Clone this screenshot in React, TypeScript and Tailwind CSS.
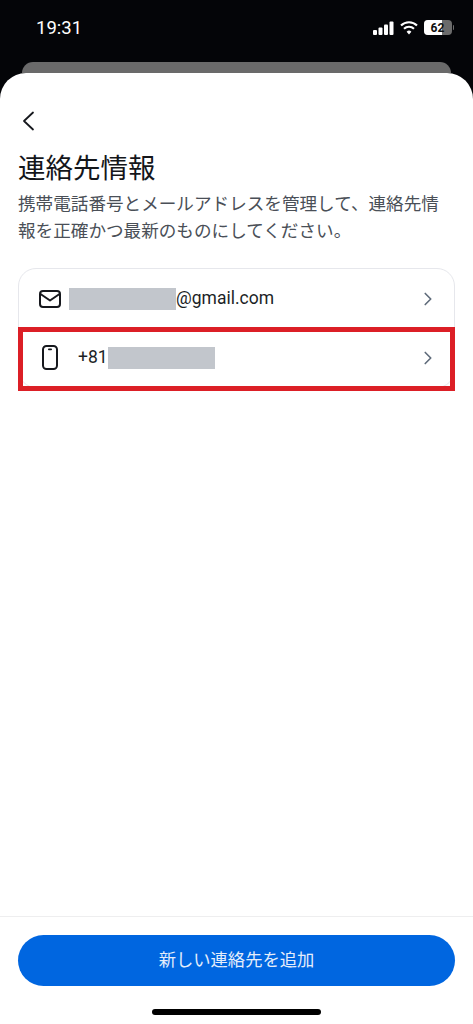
import { ChevronRight } from "lucide-react"

const jp = "font-['Roboto','Noto_Sans_CJK_JP',sans-serif]"

function StatusIcons() {
  return (
    <div className="flex items-center gap-[6px]">
      <svg width="21" height="14" viewBox="0 0 21 14" fill="#fff">
        <rect x="0" y="9" width="4" height="5" rx="1" />
        <rect x="5.5" y="6.5" width="4" height="7.5" rx="1" />
        <rect x="11" y="3.5" width="4" height="10.5" rx="1" />
        <rect x="16.5" y="0.5" width="4" height="13.5" rx="1" />
      </svg>
      <svg width="18" height="14" viewBox="0 0 18 14" fill="none" stroke="#fff" strokeWidth="2.1">
        <path d="M1 4.6a11.4 11.4 0 0 1 16 0" />
        <path d="M4 7.7a7.2 7.2 0 0 1 10 0" />
        <path d="M9 13.6 6.6 10.8a3.4 3.4 0 0 1 4.8 0Z" fill="#fff" stroke="none" />
      </svg>
      <div className="flex items-center gap-[1px]">
        <div className="relative flex h-[15px] w-[28px] items-center justify-center overflow-hidden rounded-[4px] bg-[#6b6b6b]">
          <div className="absolute inset-y-0 left-0 w-[18px] bg-white" />
          <span className="relative text-[12px] font-bold leading-none text-[#111] font-['Roboto',sans-serif]">62</span>
        </div>
        <div className="h-[5px] w-[1.5px] rounded-r-full bg-[#6b6b6b]" />
      </div>
    </div>
  )
}

function ContactRow({ icon, children }: { icon: React.ReactNode; children: React.ReactNode }) {
  return (
    <div className="flex h-[59px] items-center pl-[19px] pr-[15px]">
      <div className="flex w-[24px] shrink-0 justify-center">{icon}</div>
      <div className="flex min-w-0 flex-1 items-center text-[17.5px] text-[#1c1f26] font-['Roboto',sans-serif]">{children}</div>
      <ChevronRight className="h-[22px] w-[22px] text-[#5f6b7a]" strokeWidth={1.8} />
    </div>
  )
}

export default function App() {
  return (
    <div className={`flex h-[1024px] w-[473px] flex-col overflow-hidden bg-[#040508] ${jp}`}>
      <div className="flex h-[62px] shrink-0 items-start justify-between pl-[36px] pr-[19px] pt-[16px]">
        <span className="text-[18.5px] font-normal leading-[24px] text-white font-['Roboto',sans-serif]">19:31</span>
        <div className="pt-[4px]">
          <StatusIcons />
        </div>
      </div>
      <div className="mx-[22px] h-[11px] shrink-0 rounded-t-[20px] bg-[#6a6a6a]" />

      <div className="flex flex-1 flex-col rounded-t-[26px] bg-white">
        <div className="flex-1 px-[18px]">
          <svg className="ml-[3px] mt-[38px]" width="14" height="20" viewBox="0 0 14 20" fill="none" stroke="#16181d" strokeWidth="1.8" strokeLinecap="round" strokeLinejoin="round">
            <path d="M12 1.5 3 10l9 8.5" />
          </svg>
          <h1 className="mt-[20px] text-[27.5px] font-normal leading-[36px] text-[#14161a]">連絡先情報</h1>
          <p className="mt-[4px] text-[17.6px] leading-[27px] text-[#4a4f57]">
            携帯電話番号とメールアドレスを管理して、連絡先情報を正確かつ最新のものにしてください。
          </p>

          <div className="relative mt-[23px] rounded-[18px] border border-[#e6e7ec]">
            <ContactRow
              icon={
                <svg width="22" height="18" viewBox="0 0 22 18" fill="none" stroke="#16181d" strokeWidth="2" strokeLinejoin="round">
                  <rect x="1" y="1" width="20" height="16" rx="3" />
                  <path d="M1.5 4 11 10.5 20.5 4" />
                </svg>
              }
            >
              <span className="ml-[7px] h-[22px] w-[107px] bg-[#c2c6cc]" />
              <span>@gmail.com</span>
            </ContactRow>
            <ContactRow
              icon={
                <svg width="16" height="25" viewBox="0 0 16 25" fill="none" stroke="#16181d" strokeWidth="2">
                  <rect x="1" y="1" width="14" height="23" rx="3.5" />
                  <rect x="6" y="3.6" width="4" height="1.6" rx="0.8" fill="#16181d" stroke="none" />
                </svg>
              }
            >
              <span className="ml-[16px]">+81</span>
              <span className="h-[22px] w-[107px] bg-[#c2c6cc]" />
            </ContactRow>
            <div className="absolute inset-x-[-1px] bottom-[-4px] top-[58px] border-[5px] border-[#dc1f26]" />
          </div>
        </div>

        <div className="shrink-0 border-t border-[#eeeeef] px-[18px] pt-[18px]">
          <button className="flex h-[51px] w-full items-center justify-center rounded-full bg-[#0066e0] text-[17.3px] text-[#e4edfb]">
            新しい連絡先を追加
          </button>
          <div className="mx-auto mb-[9px] mt-[23px] h-[6px] w-[169px] rounded-full bg-black" />
        </div>
      </div>
    </div>
  )
}
